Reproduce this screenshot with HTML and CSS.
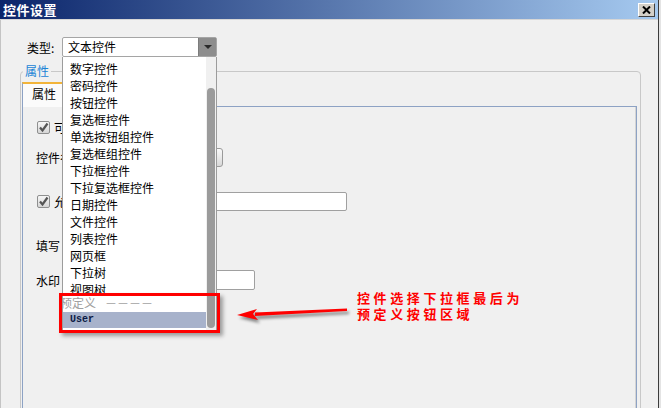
FILE: index.html
```html
<!DOCTYPE html>
<html lang="zh-CN">
<head>
    <meta charset="UTF-8">
    <meta name="viewport" content="width=device-width, initial-scale=1.0">
    <title>控件设置</title>
    <link rel="stylesheet" href="styles.css">
</head>
<body>
    <div class="window">
        <div class="titlebar">
            <span class="title">控件设置</span>
            <span class="close">
                <svg width="9" height="8" viewBox="0 0 9 8"><path d="M1 0.5 L8 7.5 M8 0.5 L1 7.5" stroke="#000" stroke-width="2"/></svg>
            </span>
        </div>
        <div class="content">
            <div class="type-row">
                <span class="type-label">类型:</span>
                <div class="combo">
                    <span class="combo-text">文本控件</span>
                    <span class="combo-btn"><i class="caret"></i></span>
                    <div class="dropdown">
                        <div class="list">
                            <div class="items">
                                <div class="item">数字控件</div>
                                <div class="item">密码控件</div>
                                <div class="item">按钮控件</div>
                                <div class="item">复选框控件</div>
                                <div class="item">单选按钮组控件</div>
                                <div class="item">复选框组控件</div>
                                <div class="item">下拉框控件</div>
                                <div class="item">下拉复选框控件</div>
                                <div class="item">日期控件</div>
                                <div class="item">文件控件</div>
                                <div class="item">列表控件</div>
                                <div class="item">网页框</div>
                                <div class="item">下拉树</div>
                                <div class="item">视图树</div>
                            </div>
                            <div class="group-head">预定义<span class="dashes">－－－－</span></div>
                            <div class="item selected">User</div>
                        </div>
                        <div class="scroll"><div class="thumb"></div></div>
                    </div>
                </div>
            </div>

            <fieldset class="group">
                <legend>属性</legend>
                <div class="tabs">
                    <div class="tab">属性</div>
                </div>
                <div class="panel">
                    <div class="row">
                        <div class="lead"><span class="check"><svg width="11" height="11" viewBox="0 0 11 11"><path d="M2 5.5 L4.5 8.5 L9.5 1.5" fill="none" stroke="#555" stroke-width="2.2"/></svg></span>可见</div>
                    </div>
                    <div class="row">
                        <div class="lead">控件名</div>
                        <span class="btn-field"></span>
                    </div>
                    <div class="row gap-l">
                        <div class="lead"><span class="check"><svg width="11" height="11" viewBox="0 0 11 11"><path d="M2 5.5 L4.5 8.5 L9.5 1.5" fill="none" stroke="#555" stroke-width="2.2"/></svg></span>允许</div>
                        <span class="text-field"></span>
                    </div>
                    <div class="row gap-l">
                        <div class="lead">填写</div>
                    </div>
                    <div class="row gap-m">
                        <div class="lead">水印</div>
                        <span class="text-field short"></span>
                    </div>
                </div>
            </fieldset>
        </div>

        <!-- 标注 -->
        <div class="highlight"></div>
        <svg class="arrow" width="125" height="28" viewBox="0 0 125 28">
            <polygon points="25,12.5 117,8.5 117,11 25,16" fill="#ff0000"/>
            <polygon points="7,15 27,9 23,14 28,20" fill="#ff0000"/>
        </svg>
        <div class="note">控件选择下拉框最后为<br>预定义按钮区域</div>
    </div>
</body>
</html>
```

FILE: styles.css
```css
* {
    box-sizing: border-box;
}
body {
    margin: 0;
    background-color: #e4e4e4;
    font-family: "Noto Sans CJK SC", "Noto Sans", sans-serif;
    font-size: 12px;
    color: #000;
}
.window {
    position: relative;
    width: 659px;
    height: 408px;
    background-color: #f0f0f0;
    border-right: 1px solid #3c3c3c;
    overflow: hidden;
}
.titlebar {
    height: 20px;
    display: flex;
    align-items: center;
    justify-content: space-between;
    padding: 0 3px 0 3px;
    background: linear-gradient(to right, #0a246a, #a6caf0);
    border-bottom: 1px solid #d6d6d6;
}
.title {
    color: #ffffff;
    font-weight: bold;
    font-size: 13px;
    letter-spacing: 0.5px;
    line-height: 19px;
}
.close {
    width: 17px;
    height: 14px;
    display: flex;
    align-items: center;
    justify-content: center;
    background-color: #d4d0c8;
    border: 1px solid;
    border-color: #ffffff #404040 #404040 #ffffff;
}
.content {
    height: 388px;
    padding: 17px 0 0 19px;
    border-left: 1px solid #c4c4c4;
}
.type-row {
    display: flex;
    align-items: center;
    padding-left: 7px;
}
.type-label {
    width: 35px;
}
.combo {
    position: relative;
    width: 155px;
    height: 20px;
    display: flex;
    background-color: #ffffff;
    border: 1px solid #a5a5a5;
    border-radius: 2px;
    z-index: 5;
}
.combo-text {
    flex: 1;
    padding-left: 5px;
    line-height: 18px;
}
.combo-btn {
    width: 18px;
    display: flex;
    align-items: center;
    justify-content: center;
    background-color: #8d8d8d;
    border-left: 1px solid #7c7c7c;
}
.caret {
    width: 0;
    height: 0;
    border-left: 4px solid transparent;
    border-right: 4px solid transparent;
    border-top: 4px solid #2a2a2a;
}
.dropdown {
    position: absolute;
    left: -1px;
    top: 19px;
    width: 155px;
    height: 274px;
    display: flex;
    background-color: #ffffff;
    border: 1px solid #9c9c9c;
    border-top: none;
}
.list {
    flex: 1;
    display: flex;
    flex-direction: column;
    overflow: hidden;
}
.items {
    height: 236px;
    padding-top: 3px;
    overflow: hidden;
}
.item {
    height: 17px;
    line-height: 17px;
    padding-left: 7px;
    white-space: nowrap;
}
.group-head {
    height: 19px;
    line-height: 19px;
    color: #a0a0a0;
    text-indent: -3px;
    white-space: nowrap;
    overflow: hidden;
}
.dashes {
    margin-left: 9px;
}
.item.selected {
    height: 16px;
    line-height: 16px;
    background-color: #a7b2cb;
    color: #0d1b45;
    font-family: "Liberation Mono", monospace;
    font-weight: bold;
    font-size: 10px;
}
.scroll {
    width: 10px;
    padding: 31px 1px 0 1px;
    background-color: #f0f0f0;
}
.thumb {
    height: 240px;
    background-color: #9b9b9b;
    border-radius: 4px;
}
.group {
    margin: 6px 0 0 0;
    width: 621px;
    height: 400px;
    min-width: 0;
    padding: 3px 3px 0 1px;
    border: 1px solid #c8c8c8;
    border-radius: 4px;
}
.group legend {
    margin-left: 1px;
    padding: 0 2px;
    line-height: 16px;
    color: #1a84d6;
}
.tabs {
    display: flex;
    height: 24px;
}
.tab {
    position: relative;
    z-index: 1;
    width: 48px;
    height: 25px;
    padding: 1px 0 0 9px;
    line-height: 18px;
    background-color: #fbfbfb;
    border: 1px solid #8da2c4;
    border-top: 2px solid #f2b43a;
    border-bottom: none;
}
.panel {
    height: 340px;
    padding: 0 0 0 13px;
    background-color: #f0f0f0;
    border: 1px solid #8da2c4;
    box-shadow: inset -1px 0 0 #d4d4d4;
}
.row {
    display: flex;
    align-items: center;
    height: 20px;
    margin-top: 10px;
}
.row.gap-l {
    margin-top: 24px;
}
.row.gap-m {
    margin-top: 15px;
}
.lead {
    width: 150px;
    display: flex;
    align-items: center;
    white-space: nowrap;
}
.check {
    width: 13px;
    height: 13px;
    margin: 0 4px 0 1px;
    display: flex;
    align-items: center;
    justify-content: center;
    background: linear-gradient(#f6f6f6, #d6d6d6);
    border: 1px solid #8e8f8f;
    border-radius: 2px;
}
.btn-field {
    width: 37px;
    height: 19px;
    background: linear-gradient(#fafafa, #d8d8d8);
    border: 1px solid #9a9a9a;
    border-radius: 3px;
}
.text-field {
    width: 161px;
    height: 19px;
    background-color: #ffffff;
    border: 1px solid #a0a0a0;
    border-radius: 2px;
}
.text-field.short {
    width: 69px;
    height: 20px;
}
.highlight {
    position: absolute;
    left: 59px;
    top: 293px;
    width: 161px;
    height: 40px;
    border: 3px solid #ff0000;
    box-shadow: 3px 3px 4px rgba(0, 0, 0, 0.35);
    z-index: 10;
}
.arrow {
    position: absolute;
    left: 230px;
    top: 300px;
    filter: drop-shadow(2px 3px 1.5px rgba(0, 0, 0, 0.45));
}
.note {
    position: absolute;
    left: 357px;
    top: 290px;
    color: #ff0000;
    font-weight: bold;
    font-size: 13px;
    letter-spacing: 3.6px;
    line-height: 16px;
}
```
